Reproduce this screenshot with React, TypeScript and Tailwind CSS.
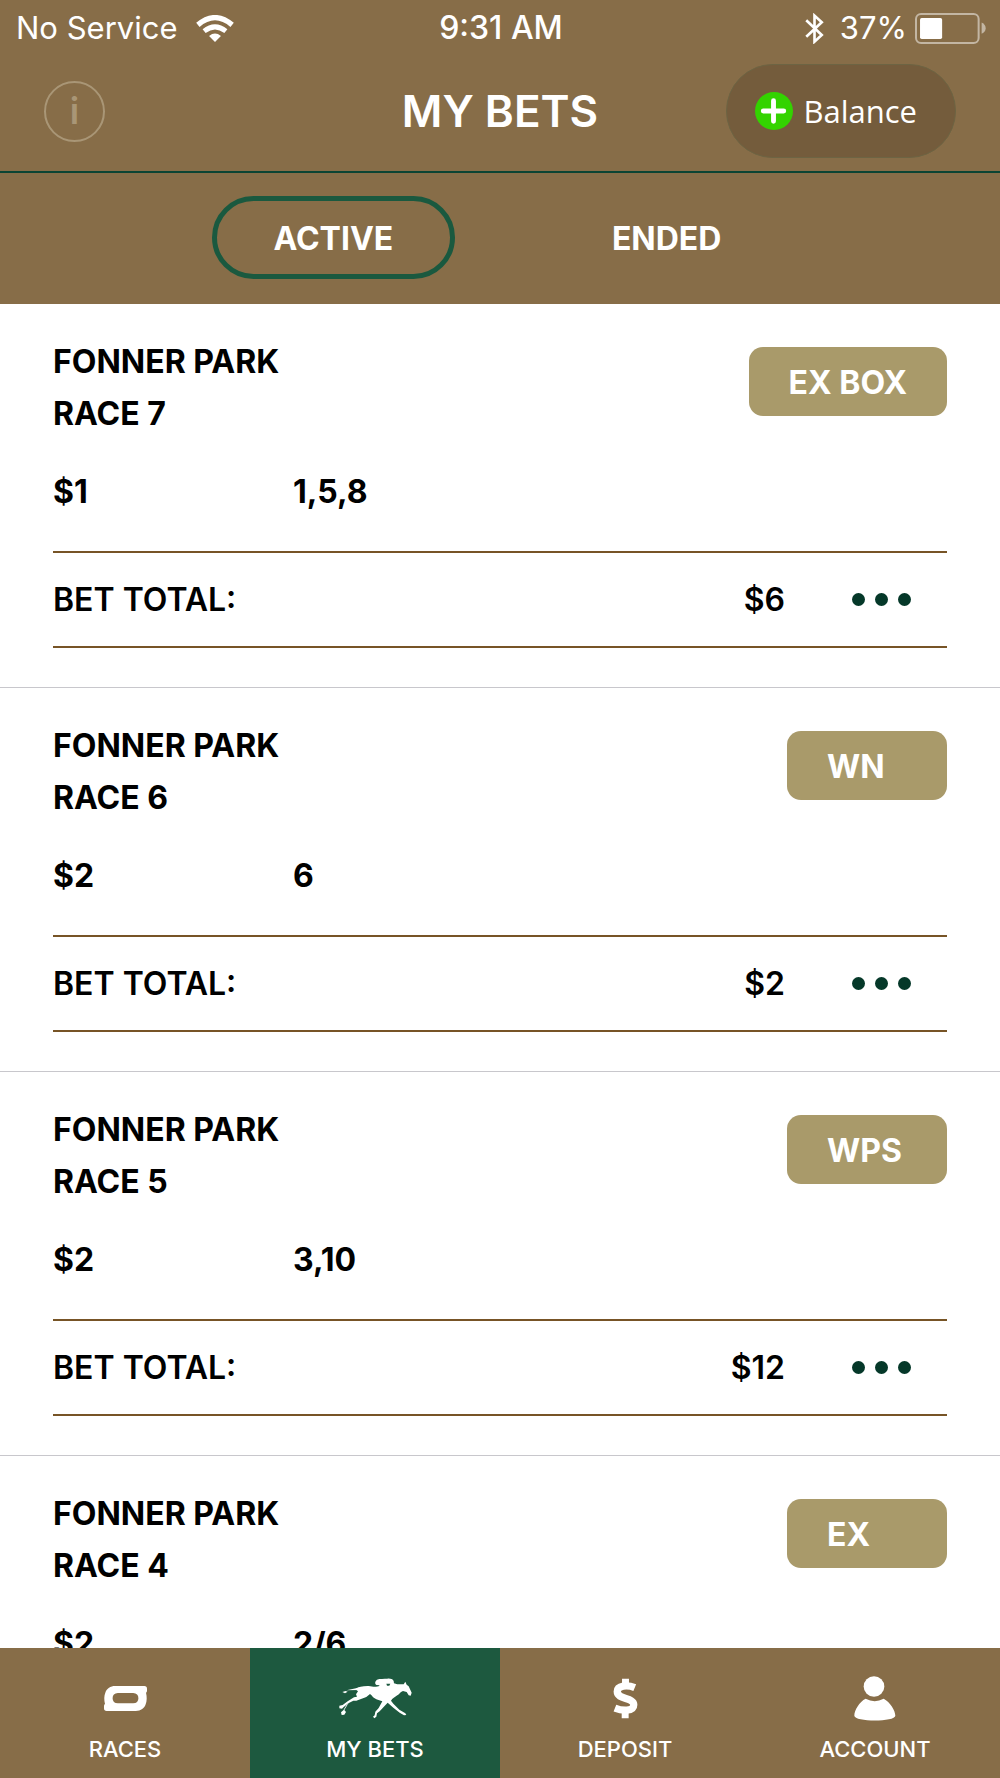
import { useState } from "react"

const bets = [
  { track: "FONNER PARK", race: "RACE 7", type: "EX BOX", amount: "$1", picks: "1,5,8", total: "$6" },
  { track: "FONNER PARK", race: "RACE 6", type: "WN", amount: "$2", picks: "6", total: "$2" },
  { track: "FONNER PARK", race: "RACE 5", type: "WPS", amount: "$2", picks: "3,10", total: "$12" },
  { track: "FONNER PARK", race: "RACE 4", type: "EX", amount: "$2", picks: "2/6", total: "$2" },
]

const WifiIcon = () => (
  <svg viewBox="0 0 114 82" className="w-[38px] h-[27px]" fill="none" aria-hidden="true">
    <path d="M5 30 Q57 -14 109 30" stroke="white" strokeWidth="16" />
    <path d="M24 49 Q57 23 90 49" stroke="white" strokeWidth="15" />
    <path d="M39 64 Q57 49 75 64 L57 82 Z" fill="white" />
  </svg>
)

const BluetoothIcon = () => (
  <svg viewBox="0 0 56 94" className="w-[19px] h-[31px]" fill="none" aria-hidden="true">
    <path d="M3 22 L50 67 L28 87 V8 L50 28 L3 72" stroke="white" strokeWidth="8" />
  </svg>
)

const BatteryIcon = () => (
  <svg viewBox="0 0 212 92" className="w-[71px] h-[31px]" fill="none" aria-hidden="true">
    <rect x="3" y="3" width="187" height="86" rx="15" stroke="#c3b6a3" strokeWidth="6" />
    <rect x="15" y="15" width="66" height="62" rx="5" fill="white" />
    <path d="M199 28 Q211 34 211 45 Q211 56 199 62 Z" fill="#c3b6a3" />
  </svg>
)

const PlusIcon = () => (
  <svg viewBox="0 0 39 39" className="w-[38px] h-[38px]" aria-hidden="true">
    <circle cx="19.5" cy="19.5" r="19.5" fill="#33d300" />
    <path d="M19 9 V30 M8.500 19.500 H29.500" stroke="white" strokeWidth="5" strokeLinecap="round" />
  </svg>
)

const RacesIcon = () => (
  <svg viewBox="309 260 130 75" className="w-[43px] h-[25px]" aria-hidden="true">
    <path
      fill="white"
      fillRule="evenodd"
      d="M343 260 H431 Q439 260 439 268 V274 Q439 278 436 280 C439 292 439 305 435 315 C431 327 421 335 405 335 H317 Q309 335 309 327 V320 Q309 316 312 314 C309 302 309 289 313 280 C318 267 328 260 343 260 Z M351 281 Q335 282 335 297 Q335 312 351 312 H397 Q413 312 413 297 Q413 282 397 281 Z"
    />
  </svg>
)

const HorseIcon = () => (
  <svg viewBox="54 56 219 123" className="w-[73px] h-[41px]" fill="white" aria-hidden="true">
    <path d="M103 90 C112 83 124 80 140 80 C150 79 158 84 165 82 L173 81 L176 78 L167 77 C161 74 161 66 168 61 C176 57 190 59 199 58 C207 57 215 59 218 65 L219 72 L229 75 C237 75 243 74 248 75 L253 67 L257 76 L263 81 L272 100 L269 109 L263 108 L257 98 L246 95 C239 96 236 104 229 108 C222 113 214 117 210 124 L217 133 L235 151 L253 162 L256 167 L249 168 L236 160 L217 145 L200 130 L190 141 L176 156 L168 162 L166 172 L160 177 L156 172 L161 168 L163 157 L173 146 L184 126 C172 121 159 119 153 109 L147 104 L136 113 L122 118 L106 124 L97 124 L82 132 L68 143 L63 148 L55 147 L55 139 L65 137 L80 126 L99 114 L108 112 L105 105 L111 96 Z" />
    <path d="M105 87 L76 93 L114 92 L137 84 L115 84 Z M64 98 L74 95 L80 97 L72 102 Z" />
    <path d="M84 131 L79 137 L70 152 L75 158 L70 166 L62 167 L60 159 L67 153 L76 138 Z" />
    <path d="M196 73 L208 73 L205 79 L198 79 Z" fill="#1d593f" />
  </svg>
)

const DollarIcon = () => (
  <svg viewBox="338 534 74 124" className="w-[25px] h-[41px]" fill="none" aria-hidden="true">
    <path
      d="M403 563 C381 554 350 556 350 575 C350 600 400 592 400 615 C400 637 363 633 343 625"
      stroke="white"
      strokeWidth="22"
    />
    <path d="M375 536 V558 M374 634 V656" stroke="white" strokeWidth="21" />
  </svg>
)

const AccountIcon = () => (
  <svg viewBox="1057 528 126 134" className="w-[42px] h-[45px]" fill="white" aria-hidden="true">
    <circle cx="1117" cy="559" r="31" />
    <path d="M1092 596 Q1119 610 1146 596 C1165 606 1181 631 1181 647 C1181 666 1058 666 1058 647 C1058 631 1073 605 1092 596 Z" />
  </svg>
)

const navItems = [
  { label: "RACES", icon: <RacesIcon /> },
  { label: "MY BETS", icon: <HorseIcon /> },
  { label: "DEPOSIT", icon: <DollarIcon /> },
  { label: "ACCOUNT", icon: <AccountIcon /> },
]

const App = () => {
  const [tab, setTab] = useState("ACTIVE")

  return (
    <div className="flex flex-col h-screen bg-white text-black font-['Inter',sans-serif]">
      {/* Header */}
      <header className="bg-[#876d48] text-white border-b-2 border-[#0b4433]">
        <div className="grid grid-cols-[1fr_auto_1fr] items-center h-14 pl-4 pr-[14px] text-[31px]">
          <div className="flex items-center gap-[18px]">
            <span>No Service</span>
            <WifiIcon />
          </div>
          <span className="text-[32px] font-medium">9:31 AM</span>
          <div className="flex items-center justify-end">
            <BluetoothIcon />
            <span className="ml-4 mr-2">37%</span>
            <BatteryIcon />
          </div>
        </div>

        <div className="grid grid-cols-[1fr_auto_1fr] items-center pt-2 pb-[13px] px-11">
          <button
            aria-label="Info"
            className="flex items-center justify-center w-[61px] h-[61px] rounded-full border-2 border-[#a99676] text-[#a99676] text-4xl font-semibold"
          >
            i
          </button>
          <h1 className="text-[44px] font-semibold">MY BETS</h1>
          <button className="justify-self-end flex items-center gap-[10px] h-[94px] pl-7 pr-[38px] rounded-full border border-[#6d6443] bg-[#745c3c] text-[31px] font-['Open_Sans',sans-serif]">
            <PlusIcon />
            Balance
          </button>
        </div>
      </header>

      {/* Tabs */}
      <div className="bg-[#876d48]">
        <div className="grid grid-cols-2 justify-items-center w-2/3 mx-auto pt-[23px] pb-[25px]">
          {["ACTIVE", "ENDED"].map((name) => (
            <button
              key={name}
              onClick={() => setTab(name)}
              className={`w-[243px] h-[83px] pt-0.5 rounded-full border-5 text-white text-[32px] font-bold ${
                tab === name ? "border-[#1a593f]" : "border-transparent"
              }`}
            >
              {name}
            </button>
          ))}
        </div>
      </div>

      {/* Bets */}
      <main className="flex-1 min-h-0 overflow-y-auto [scrollbar-width:none] text-[32px] leading-[52px]">
        {bets.map((bet) => (
          <section key={bet.race} className="px-[53px] pt-8 pb-[39px] border-b border-[#c8c7cc]">
            <div className="flex items-start justify-between font-bold">
              <h2>
                {bet.track}
                <br />
                {bet.race}
              </h2>
              <span className="flex items-center mt-[11px] min-w-40 h-[69px] px-10 pt-0.5 rounded-[14px] bg-[#a99a6a] text-white">
                {bet.type}
              </span>
            </div>

            <div className="flex mt-[26px] mb-[33px] font-bold">
              <span className="w-60">{bet.amount}</span>
              <span>{bet.picks}</span>
            </div>

            <div className="flex items-center h-[97px] border-y-2 border-[#775426] font-semibold">
              <span>BET TOTAL:</span>
              <span className="ml-auto">{bet.total}</span>
              <button aria-label="Bet options" className="flex gap-[10px] ml-[67px] mr-9">
                <span className="w-[13px] h-[13px] rounded-full bg-[#053829]"></span>
                <span className="w-[13px] h-[13px] rounded-full bg-[#053829]"></span>
                <span className="w-[13px] h-[13px] rounded-full bg-[#053829]"></span>
              </button>
            </div>
          </section>
        ))}
      </main>

      {/* Bottom nav */}
      <nav className="grid grid-cols-4 bg-[#876d48] text-white text-[22px] font-medium">
        {navItems.map((item) => (
          <a
            key={item.label}
            href="#"
            className={`flex flex-col items-center pt-7 pb-3 ${item.label === "MY BETS" ? "bg-[#1d593f]" : ""}`}
          >
            <span className="flex items-center h-[45px]">{item.icon}</span>
            <span className="mt-3 leading-[33px]">{item.label}</span>
          </a>
        ))}
      </nav>
    </div>
  )
}

export default App
